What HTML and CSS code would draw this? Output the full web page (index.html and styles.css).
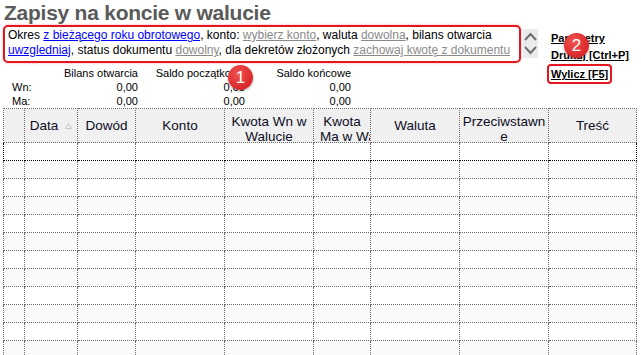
FILE: index.html
```html
<!DOCTYPE html>
<html lang="pl">
<head>
    <meta charset="UTF-8">
    <title>Zapisy na koncie w walucie</title>
    <link rel="stylesheet" href="styles.css">
</head>
<body>
    <h1 class="title">Zapisy na koncie w walucie</h1>
    <div class="top">
        <div class="left">
            <div class="filter">
                Okres <a class="lnk">z bieżącego roku obrotowego</a>, konto: <a class="opt">wybierz konto</a>, waluta <a class="opt">dowolna</a>, bilans otwarcia
                <a class="lnk">uwzgledniaj</a>, status dokumentu <a class="opt">dowolny</a>, dla dekretów złożonych <a class="opt">zachowaj kwotę z dokumentu</a>
            </div>
            <div class="summary">
                <span></span>
                <span>Bilans otwarcia</span>
                <span>Saldo początkowe</span>
                <span>Saldo końcowe</span>
                <span class="lbl">Wn:</span>
                <span>0,00</span>
                <span>0,00</span>
                <span>0,00</span>
                <span class="lbl">Ma:</span>
                <span>0,00</span>
                <span>0,00</span>
                <span>0,00</span>
            </div>
        </div>
        <div class="arrows">
            <svg width="15" height="29" viewBox="0 0 15 29">
                <path d="M2 11 L7.5 5 L13 11" fill="none" stroke="#6e6e6e" stroke-width="2"/>
                <path d="M2 18 L7.5 24 L13 18" fill="none" stroke="#6e6e6e" stroke-width="2"/>
            </svg>
        </div>
        <div class="actions">
            <a>Parametry</a>
            <a>Drukuj [Ctrl+P]</a>
            <a class="marked">Wylicz [F5]</a>
        </div>
    </div>

    <table class="grid">
        <colgroup>
            <col style="width:21px">
            <col style="width:53px">
            <col style="width:58px">
            <col style="width:89px">
            <col style="width:89px">
            <col style="width:57px">
            <col style="width:89px">
            <col style="width:89px">
            <col style="width:88px">
        </colgroup>
        <thead>
            <tr>
                <th></th>
                <th><div class="hd">Data <svg class="sort" width="7" height="6" viewBox="0 0 7 6"><path d="M0.5 5.5 L3.5 0.5 L6.5 5.5 Z" fill="none" stroke="#c8c8c8"/></svg></div></th>
                <th><div class="hd">Dowód</div></th>
                <th><div class="hd">Konto</div></th>
                <th><div class="hd two">Kwota Wn w Walucie</div></th>
                <th><div class="hd two">Kwota<span class="cut">Ma w Walucie</span></div></th>
                <th><div class="hd">Waluta</div></th>
                <th><div class="hd two">Przeciwstawne</div></th>
                <th><div class="hd">Treść</div></th>
            </tr>
        </thead>
        <tbody>
            <tr class="current"><td></td><td></td><td></td><td></td><td></td><td></td><td></td><td></td><td></td></tr>
            <tr><td></td><td></td><td></td><td></td><td></td><td></td><td></td><td></td><td></td></tr>
            <tr><td></td><td></td><td></td><td></td><td></td><td></td><td></td><td></td><td></td></tr>
            <tr><td></td><td></td><td></td><td></td><td></td><td></td><td></td><td></td><td></td></tr>
            <tr><td></td><td></td><td></td><td></td><td></td><td></td><td></td><td></td><td></td></tr>
            <tr><td></td><td></td><td></td><td></td><td></td><td></td><td></td><td></td><td></td></tr>
            <tr><td></td><td></td><td></td><td></td><td></td><td></td><td></td><td></td><td></td></tr>
            <tr><td></td><td></td><td></td><td></td><td></td><td></td><td></td><td></td><td></td></tr>
            <tr><td></td><td></td><td></td><td></td><td></td><td></td><td></td><td></td><td></td></tr>
            <tr><td></td><td></td><td></td><td></td><td></td><td></td><td></td><td></td><td></td></tr>
            <tr><td></td><td></td><td></td><td></td><td></td><td></td><td></td><td></td><td></td></tr>
            <tr><td></td><td></td><td></td><td></td><td></td><td></td><td></td><td></td><td></td></tr>
        </tbody>
    </table>

    <span class="badge badge-1">1</span>
    <span class="badge badge-2">2</span>
</body>
</html>
```

FILE: styles.css
```css
body {
    margin: 0;
    font-family: "Liberation Sans", Arial, sans-serif;
    color: #000;
    background: #fff;
    width: 641px;
    height: 355px;
    overflow: hidden;
    position: relative;
}
.title {
    margin: 0;
    padding: 0 0 0 4px;
    height: 25px;
    font-size: 21px;
    line-height: 25px;
    font-weight: bold;
    color: #5a5a5a;
    letter-spacing: -0.25px;
}
.top {
    display: flex;
    align-items: flex-start;
}
.left {
    width: 518px;
    margin-left: 3px;
}
.filter {
    border: 2px solid #e3171f;
    border-radius: 5px;
    box-shadow: 0 0 2px rgba(232, 22, 30, 0.5);
    padding: 1px 3px 1px 3px;
    height: 32px;
    font-size: 12px;
    line-height: 15px;
}
.filter a {
    text-decoration: underline;
}
.lnk {
    color: #0000ff;
}
.opt {
    color: #8a8a8a;
}
.summary {
    display: grid;
    grid-template-columns: 40px 86px 107px 106px;
    grid-auto-rows: 14px;
    padding: 3px 0 0 9px;
    font-size: 11px;
    line-height: 14px;
    text-align: right;
}
.summary .lbl {
    text-align: left;
}
.arrows {
    margin: 4px 0 0 2px;
    width: 15px;
    height: 29px;
    background: #ebebeb;
}
.actions {
    display: flex;
    flex-direction: column;
    align-items: flex-start;
    margin: 5px 0 0 13px;
    font-size: 11px;
    line-height: 17px;
    font-weight: bold;
}
.actions a {
    text-decoration: underline;
    color: #000;
}
.actions .marked {
    margin-left: -4px;
    padding: 0 2px;
    border: 2px solid #e3171f;
    border-radius: 4px;
    line-height: 16px;
}
.grid {
    margin: 0 0 0 3px;
    width: 633px;
    border-collapse: collapse;
    table-layout: fixed;
}
.grid th,
.grid td {
    border: 1px dotted #6a6a6a;
    padding: 0;
}
.grid th {
    height: 33px;
    background: #f0f0f0;
    font-weight: normal;
    font-size: 13.5px;
    vertical-align: top;
}
.hd {
    height: 33px;
    overflow: hidden;
    line-height: 15px;
    padding: 9px 1px 0;
    box-sizing: border-box;
    text-align: center;
    color: #0c0c24;
}
.hd.two {
    padding-top: 5px;
    word-break: break-all;
}
.cut {
    display: block;
    white-space: nowrap;
    text-align: left;
    padding-left: 5px;
}
.sort {
    margin-left: 3px;
    vertical-align: 1px;
}
.grid td {
    height: 17px;
}
.grid tbody tr:nth-child(even) td {
    background: #fafafa;
}
.grid tr.current td {
    border-top: 1px dotted #000;
    border-bottom: 1px dotted #000;
}
.grid tr.current td:first-child {
    border-left: 1px dotted #000;
}
.grid tr.current td:last-child {
    border-right: 1px dotted #000;
}
.badge {
    position: absolute;
    width: 25px;
    height: 25px;
    border-radius: 50%;
    background: radial-gradient(circle at 40% 35%, #f0554f, #d9262a 70%);
    box-shadow: 0 1px 3px rgba(0, 0, 0, 0.35);
    color: #fff;
    font-size: 17px;
    line-height: 25px;
    text-align: center;
}
.badge-1 {
    left: 228px;
    top: 65px;
}
.badge-2 {
    left: 564px;
    top: 33px;
}
```
